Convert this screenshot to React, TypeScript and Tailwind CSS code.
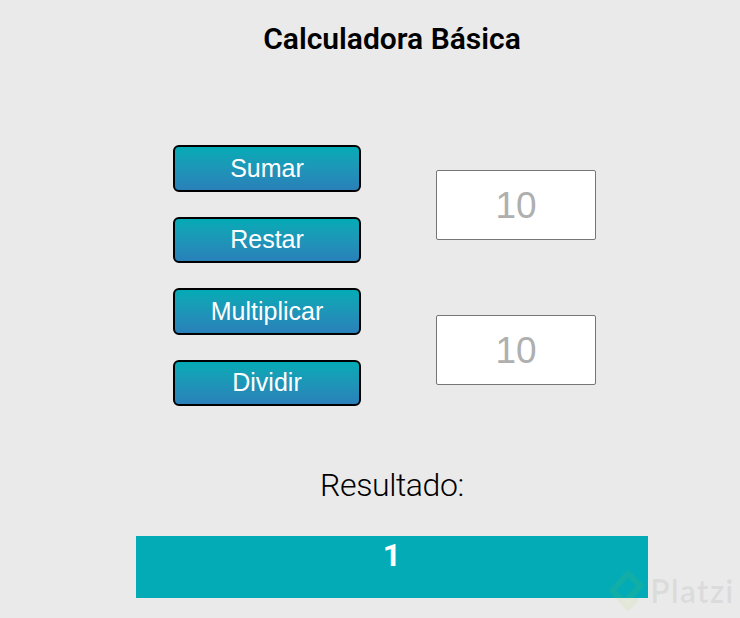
import { useState } from "react";

const operations = [
  { label: "Sumar", run: (a: number, b: number) => a + b },
  { label: "Restar", run: (a: number, b: number) => a - b },
  { label: "Multiplicar", run: (a: number, b: number) => a * b },
  { label: "Dividir", run: (a: number, b: number) => a / b },
];

function NumberInput({ value, onChange }: { value: string; onChange: (v: string) => void }) {
  return (
    <input
      type="text"
      placeholder="10"
      value={value}
      onChange={(e) => onChange(e.target.value)}
      className="w-40 h-[70px] rounded-[2px] border border-[#767676] bg-white pt-px text-center font-['Liberation_Sans',sans-serif] text-[37px] text-black placeholder:text-[#afafaf]"
    />
  );
}

function Watermark() {
  return (
    <div className="absolute left-[608px] top-[569px] flex items-center pointer-events-none">
      <svg width="37" height="43" viewBox="0 0 37 43" fill="none" className="opacity-[0.09]">
        <path
          d="M20 4.500L32.500 17L20 29.500M20 4.500L4.500 21.500L20 38.500L27 31.500"
          stroke="#a5cf2c"
          strokeWidth="6"
          strokeLinejoin="round"
          strokeLinecap="round"
        />
      </svg>
      <span className="ml-[5px] font-['Lato',sans-serif] text-[32px] leading-[43px] font-bold tracking-[1px] text-black/[0.06]">
        Platzi
      </span>
    </div>
  );
}

export default function App() {
  const [first, setFirst] = useState("");
  const [second, setSecond] = useState("");
  const [result, setResult] = useState(1);

  return (
    <main className="relative h-[618px] w-[740px] overflow-hidden bg-[#eaeaea] pl-[136px] font-['Roboto',sans-serif] text-black">
      <div className="flex w-lg flex-col">
        <h1 className="mt-[21px] text-center text-[30px] leading-9 font-semibold">Calculadora Básica</h1>

        <section className="mt-[88px] flex pl-[37px]">
          <div className="flex flex-col gap-[25px]">
            {operations.map((op) => (
              <button
                key={op.label}
                onClick={() => setResult(op.run(Number(first || 10), Number(second || 10)))}
                className="h-[46.5px] w-[188px] rounded-[6px] border-2 border-black bg-linear-to-b from-[#02abb5] to-[#2980b9] text-center font-['Liberation_Sans',sans-serif] text-[25px] leading-none text-white"
              >
                {op.label}
              </button>
            ))}
          </div>
          <div className="ml-[75px] mt-[25px] flex flex-col gap-[75px]">
            <NumberInput value={first} onChange={setFirst} />
            <NumberInput value={second} onChange={setSecond} />
          </div>
        </section>

        <h2 className="mt-[60px] text-center text-[32px] leading-[38px] font-light tracking-[-0.4px]">Resultado:</h2>
        <div className="mt-8 h-[62px] bg-[#02abb5] text-center text-[32px] leading-[38px] font-bold text-white">
          {result}
        </div>
      </div>
      <Watermark />
    </main>
  );
}
